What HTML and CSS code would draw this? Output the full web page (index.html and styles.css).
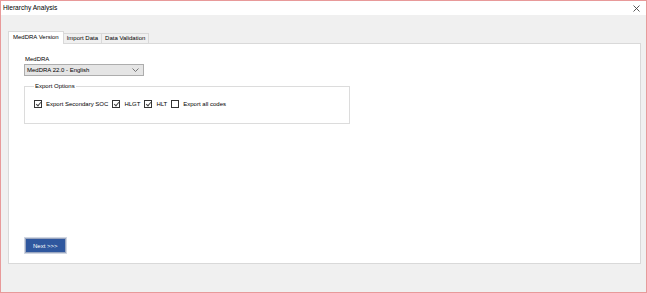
FILE: index.html
```html
<!DOCTYPE html>
<html lang="en">
<head>
    <meta charset="UTF-8">
    <title>Hierarchy Analysis</title>
    <link rel="stylesheet" href="styles.css">
</head>
<body>
    <div class="window">
        <div class="title-bar">
            <span class="title">Hierarchy Analysis</span>
            <svg class="close" width="7" height="7" viewBox="0 0 7 7">
                <path d="M0.5 0.5 L6.5 6.5 M6.5 0.5 L0.5 6.5" stroke="#444" stroke-width="0.9"/>
            </svg>
        </div>
        <div class="client">
            <div class="tabs">
                <div class="tab active">MedDRA Version</div>
                <div class="tab">Import Data</div>
                <div class="tab">Data Validation</div>
            </div>
            <div class="panel">
                <div class="label">MedDRA</div>
                <div class="select">
                    <span>MedDRA 22.0 - English</span>
                    <svg width="7" height="4" viewBox="0 0 7 4">
                        <path d="M0.5 0.5 L3.5 3.5 L6.5 0.5" stroke="#666" fill="none" stroke-width="0.9"/>
                    </svg>
                </div>
                <fieldset class="group">
                    <legend>Export Options</legend>
                    <div class="options">
                        <label class="check"><span class="box checked"></span>Export Secondary SOC</label>
                        <label class="check"><span class="box checked"></span>HLGT</label>
                        <label class="check"><span class="box checked"></span>HLT</label>
                        <label class="check"><span class="box"></span>Export all codes</label>
                    </div>
                </fieldset>
                <div class="spacer"></div>
                <button class="next-btn">Next &gt;&gt;&gt;</button>
            </div>
        </div>
    </div>
</body>
</html>
```

FILE: styles.css
```css
* {
    box-sizing: border-box;
    margin: 0;
    padding: 0;
}
html, body {
    height: 100%;
    background: #fff;
}
body {
    font-family: "Liberation Sans", Arial, sans-serif;
    font-size: 6px;
    color: #000;
}
.window {
    width: 647px;
    height: 293px;
    border: 1px solid #e89a9a;
    display: flex;
    flex-direction: column;
}
.title-bar {
    height: 14px;
    background: #fff;
    display: flex;
    align-items: center;
    justify-content: space-between;
    padding: 0 6px 2px 2px;
}
.title {
    font-size: 6.6px;
}
.close {
    margin-top: 3px;
}
.client {
    flex: 1;
    background: #f0f0f0;
    padding: 16px 5px 28px 7px;
    display: flex;
    flex-direction: column;
}
.tabs {
    display: flex;
    align-items: flex-end;
    height: 12px;
    position: relative;
    z-index: 1;
}
.tab {
    height: 10px;
    padding: 0 3px;
    line-height: 9px;
    border: 1px solid #d9d9d9;
    border-bottom: none;
    background: #f0f0f0;
    margin-left: -1px;
}
.tab.active {
    height: 13px;
    line-height: 11px;
    background: #fff;
    margin-left: 0;
    margin-bottom: -1px;
    padding: 0 4px;
}
.panel {
    flex: 1;
    background: #fff;
    border: 1px solid #d9d9d9;
    padding: 11px 15px 9px 15px;
    display: flex;
    flex-direction: column;
    align-items: flex-start;
}
.label {
    margin-left: 1px;
    line-height: 9px;
}
.select {
    width: 120px;
    height: 12px;
    background: #e5e5e5;
    border: 1px solid #adadad;
    display: flex;
    align-items: center;
    justify-content: space-between;
    padding: 0 4px 0 2px;
}
.group {
    width: 326px;
    height: 41px;
    margin-top: 7px;
    border: 1px solid #dcdcdc;
    padding: 0 9px;
}
.group legend {
    padding: 0 1px;
}
.options {
    display: flex;
    align-items: center;
    margin-top: 11px;
}
.check {
    display: flex;
    align-items: center;
    margin-right: 4px;
}
.box {
    width: 8px;
    height: 8px;
    border: 1px solid #333;
    background: #fff;
    margin-right: 4px;
    position: relative;
}
.box.checked::after {
    content: "";
    position: absolute;
    left: 2px;
    top: 0;
    width: 2px;
    height: 4px;
    border: solid #444;
    border-width: 0 1px 1px 0;
    transform: rotate(40deg);
}
.spacer {
    flex: 1;
}
.next-btn {
    width: 41px;
    height: 15px;
    margin-left: 1px;
    margin-bottom: 1px;
    font-family: inherit;
    font-size: 6px;
    color: #fff;
    background: #2f579e;
    border: 1px solid #9aa6bf;
    outline: 1px solid #d0d6e2;
    text-align: left;
    padding-left: 7px;
}
```
